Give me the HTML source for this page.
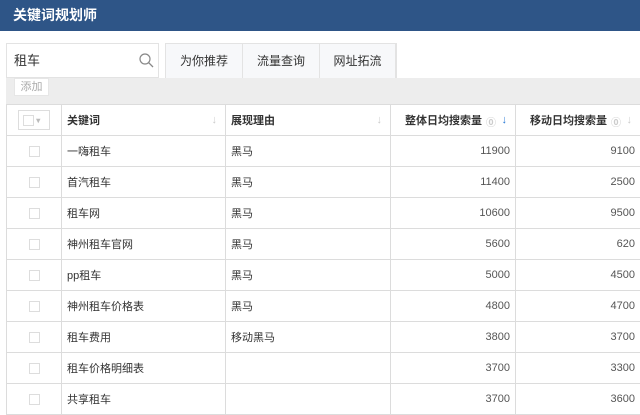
<!DOCTYPE html><html><head><meta charset="utf-8"><style>
*{margin:0;padding:0;box-sizing:border-box}
body{width:640px;height:413px;overflow:hidden;background:#fff;font-family:"Liberation Sans","Noto Sans CJK SC",sans-serif;font-size:12px;color:#333;position:relative}
.hd{position:absolute;left:0;top:0;width:640px;height:31px;background:#2e5587;color:#fff;font-size:14px;font-weight:bold;line-height:31px;padding-left:13px}
.sb{position:absolute;left:6px;top:43px;width:153px;height:35px;border:1px solid #e3e3e3;font-size:13px;line-height:33px;padding-left:7px}
.tabs{position:absolute;left:165px;top:43px;height:35px;display:flex;border:1px solid #e3e3e3;border-bottom:none;background:#f7f8fa}
.tabs div{height:34px;line-height:34px;text-align:center;border-right:1px solid #e3e3e3;font-size:12px;color:#333}
.bar{position:absolute;left:6px;top:78px;width:634px;height:26px;background:#ededed}
.add{position:absolute;left:14px;top:78px;width:35px;height:18px;background:#fff;border:1px solid #e6e6e6;color:#aaa;font-size:11px;text-align:center;line-height:16px}
table{position:absolute;left:6px;top:104px;border-collapse:collapse;width:640px;table-layout:fixed}
td,th{border:1px solid #dcdcdc;height:31px;padding:0 5px;font-weight:normal;font-size:11px;white-space:nowrap}
th{font-weight:bold;text-align:left;position:relative}
.n{text-align:right;color:#555}
.cb{display:inline-block;width:11px;height:11px;border:1px solid #ddd;vertical-align:middle}
.ar{position:absolute;right:8px;top:9px;color:#ccc;font-size:11px}
</style></head><body>
<div class="hd">关键词规划师</div>
<div class="sb">租车<svg style="position:absolute;right:4px;top:9px" width="15" height="15" viewBox="0 0 15 15"><circle cx="6" cy="6" r="5" fill="none" stroke="#888" stroke-width="1.2"/><path d="M9.7 9.7L14 14" stroke="#888" stroke-width="1.3"/></svg></div>
<div class="tabs"><div style="width:77px">为你推荐</div><div style="width:77px">流量查询</div><div style="width:76px">网址拓流</div></div>
<div class="bar"></div><div class="add">添加</div>
<table>
<colgroup><col style="width:55px"><col style="width:164px"><col style="width:165px"><col style="width:125px"><col style="width:131px"></colgroup>
<tr><th style="text-align:center"><span style="display:inline-block;width:32px;height:20px;border:1px solid #ddd;vertical-align:middle;text-align:left;padding:4px 0 0 4px;line-height:10px"><span class="cb" style="vertical-align:top"></span><span style="color:#bbb;font-size:8px"> ▾</span></span></th><th>关键词<span class="ar">↓</span></th><th>展现理由<span class="ar">↓</span></th><th style="text-align:center;padding-right:24px">整体日均搜索量<span class="ar" style="color:#2a7ad6">↓</span><span style="position:absolute;right:19px;top:9px;color:#ccc;font-size:10px">⓪</span></th><th style="text-align:center;padding-right:30px">移动日均搜索量<span class="ar" style="right:14px">↓</span><span style="position:absolute;right:25px;top:9px;color:#ccc;font-size:10px">⓪</span></th></tr>
<tr><td style="text-align:center"><span class="cb"></span></td><td>一嗨租车</td><td>黑马</td><td class="n">11900</td><td class="n" style="padding-right:11px">9100</td></tr>
<tr><td style="text-align:center"><span class="cb"></span></td><td>首汽租车</td><td>黑马</td><td class="n">11400</td><td class="n" style="padding-right:11px">2500</td></tr>
<tr><td style="text-align:center"><span class="cb"></span></td><td>租车网</td><td>黑马</td><td class="n">10600</td><td class="n" style="padding-right:11px">9500</td></tr>
<tr><td style="text-align:center"><span class="cb"></span></td><td>神州租车官网</td><td>黑马</td><td class="n">5600</td><td class="n" style="padding-right:11px">620</td></tr>
<tr><td style="text-align:center"><span class="cb"></span></td><td>pp租车</td><td>黑马</td><td class="n">5000</td><td class="n" style="padding-right:11px">4500</td></tr>
<tr><td style="text-align:center"><span class="cb"></span></td><td>神州租车价格表</td><td>黑马</td><td class="n">4800</td><td class="n" style="padding-right:11px">4700</td></tr>
<tr><td style="text-align:center"><span class="cb"></span></td><td>租车费用</td><td>移动黑马</td><td class="n">3800</td><td class="n" style="padding-right:11px">3700</td></tr>
<tr><td style="text-align:center"><span class="cb"></span></td><td>租车价格明细表</td><td></td><td class="n">3700</td><td class="n" style="padding-right:11px">3300</td></tr>
<tr><td style="text-align:center"><span class="cb"></span></td><td>共享租车</td><td></td><td class="n">3700</td><td class="n" style="padding-right:11px">3600</td></tr>
</table>
</body></html>
